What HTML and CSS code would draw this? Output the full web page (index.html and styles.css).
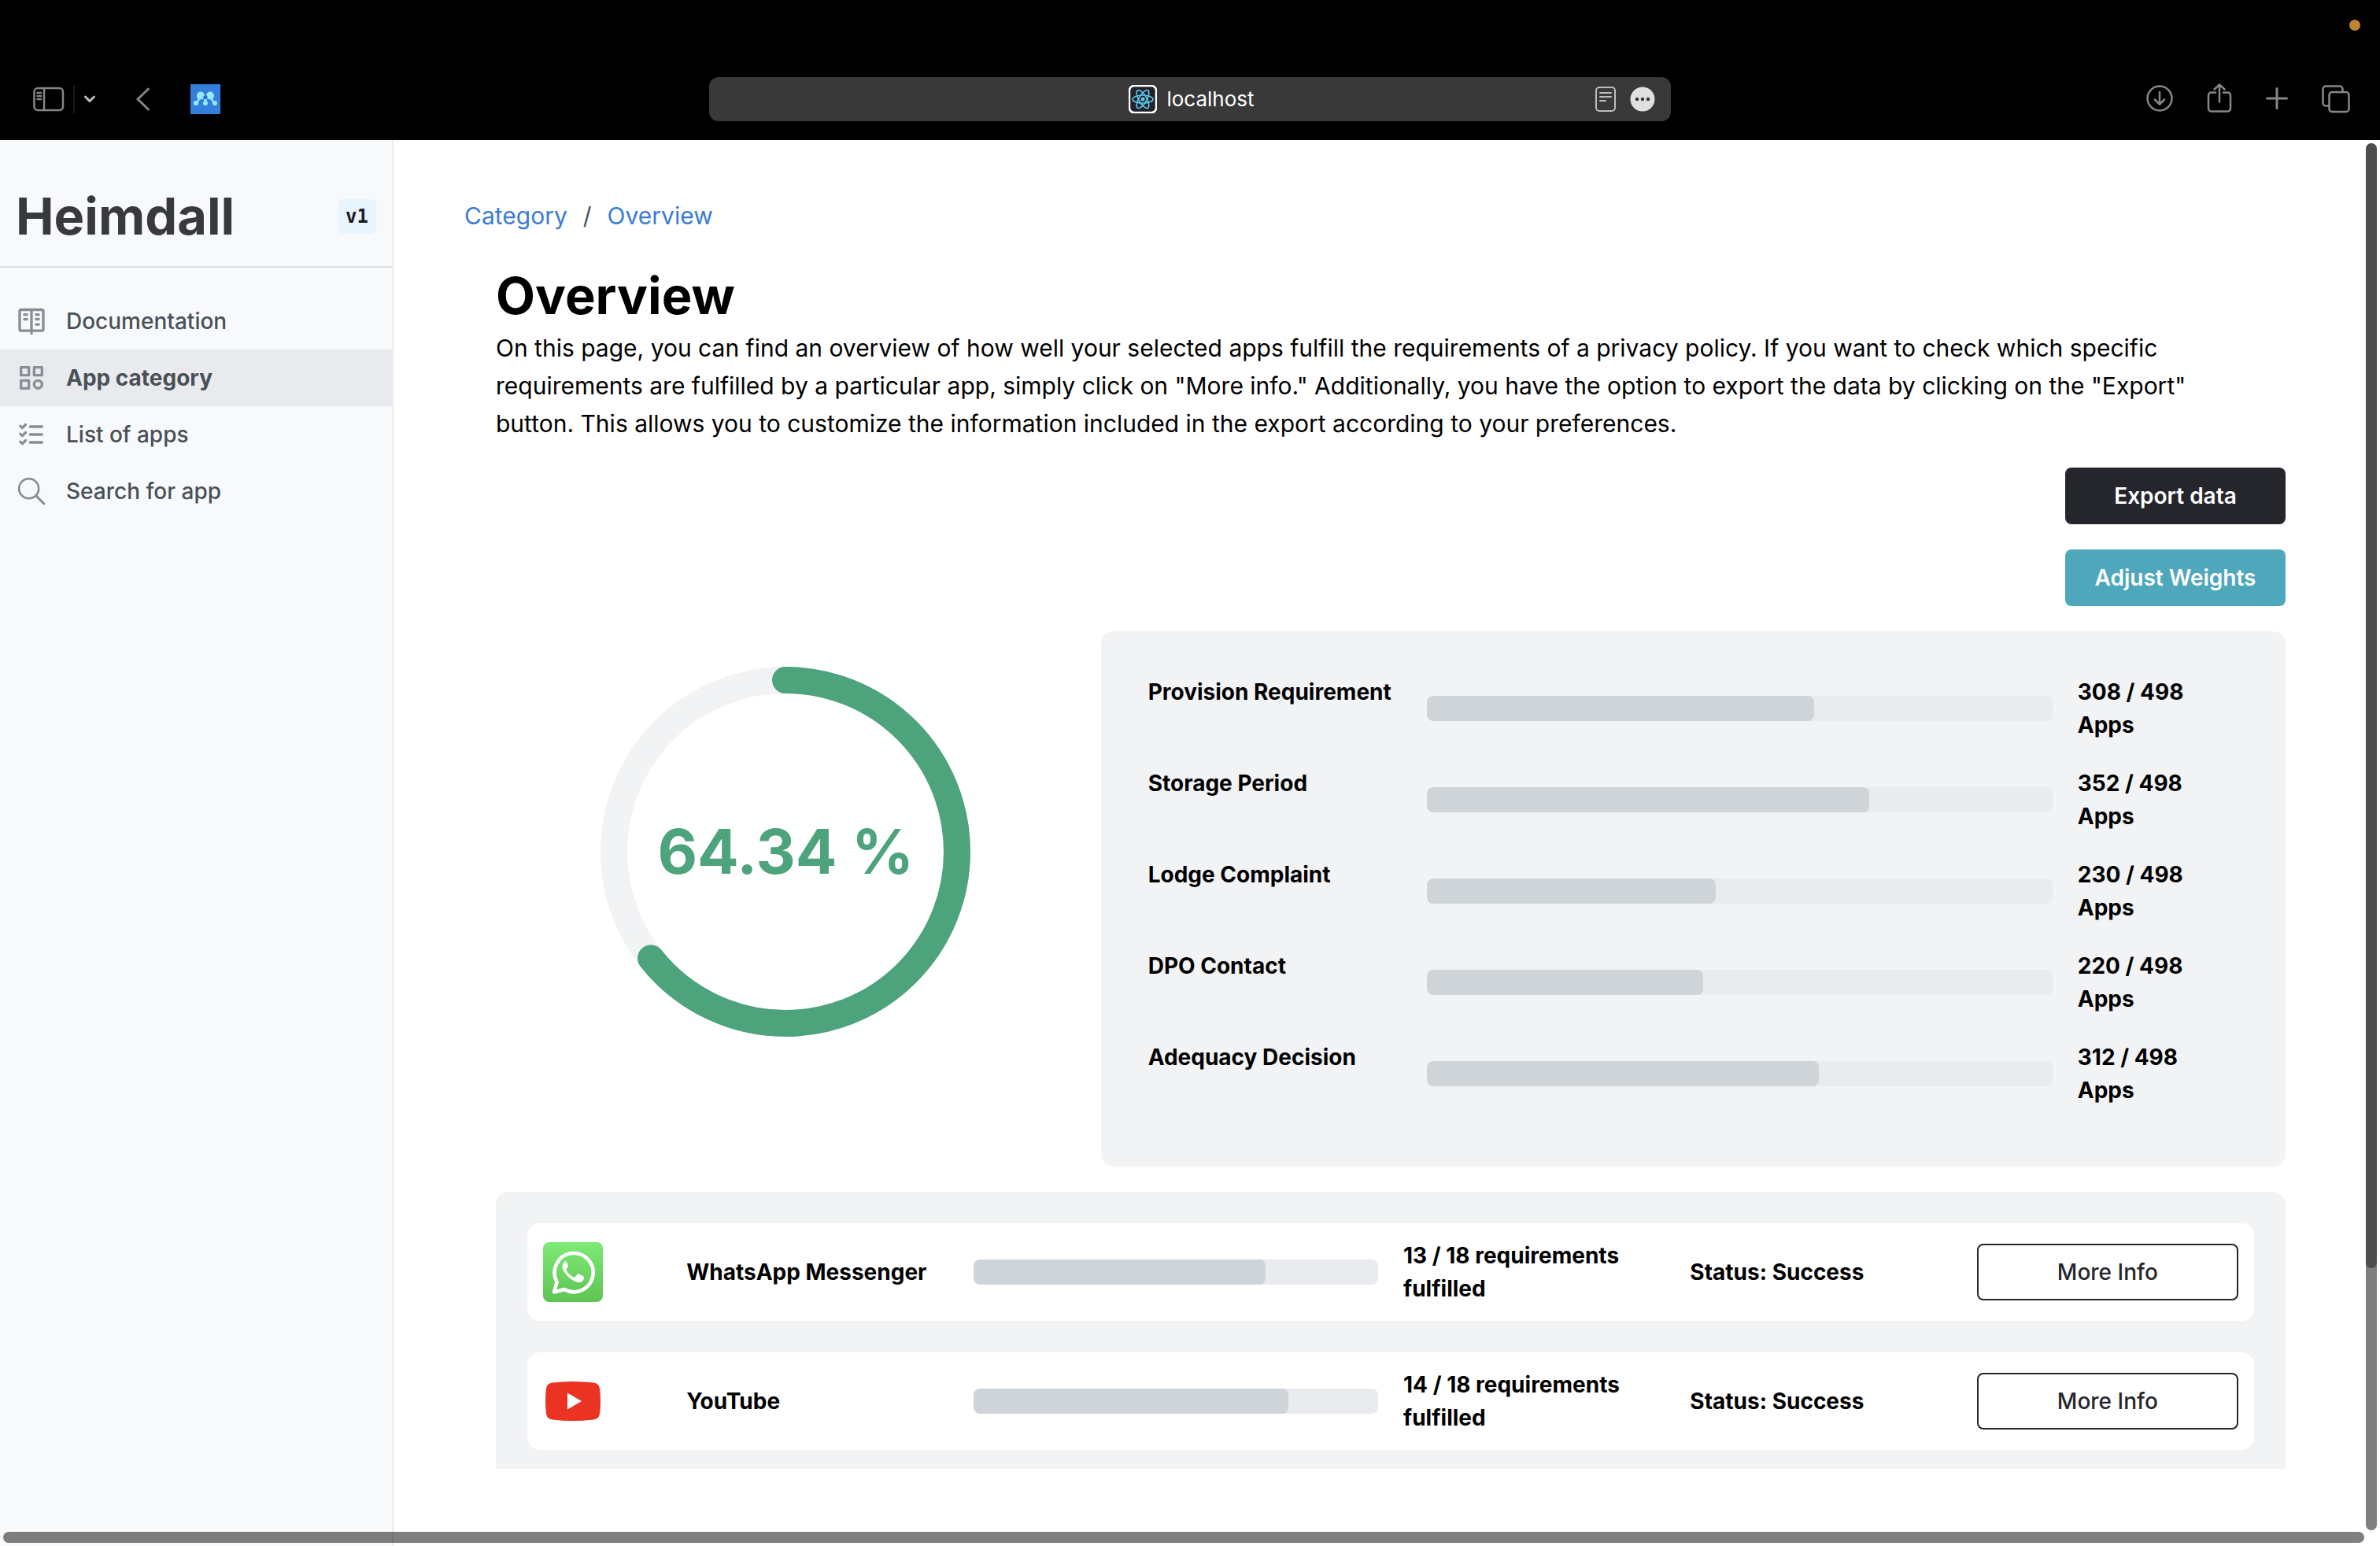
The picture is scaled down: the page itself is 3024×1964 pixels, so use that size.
FILE: index.html
```html
<!DOCTYPE html>
<html lang="en">
<head>
<meta charset="utf-8">
<title>Heimdall - Overview</title>
<link rel="stylesheet" href="styles.css">
</head>
<body>
<header class="browser">
  <span class="rec-dot"></span>
  <div class="tools tools-left">
    <button class="tool" aria-label="Show sidebar"><svg width="40" height="32" viewBox="0 0 40 32"><rect x="1.5" y="2" width="36.5" height="28" rx="4.5"/><path d="M14 2v28M5.5 8h4.5M5.5 12h4.5M5.5 16h4.5"/></svg></button>
    <span class="divider"></span>
    <button class="tool tool-chevron" aria-label="Tab groups"><svg width="16" height="12" viewBox="0 0 16 12"><path class="bright" d="M2.500 3l5.500 5.500L13.500 3"/></svg></button>
    <button class="tool tool-back" aria-label="Back"><svg width="18" height="30" viewBox="0 0 18 30"><path d="M15.500 2L2 15l13.500 13" stroke-width="3"/></svg></button>
    <button class="tool" aria-label="Mendeley"><svg class="mendeley" width="38" height="38" viewBox="0 0 38 38"><rect width="38" height="38" fill="#337fdc"/><path d="M7 24q4-2 4-9M31 24q-4-2-4-9M13 15q6 0 6 9q0-9 6-9" fill="none" stroke="#99e6ff" stroke-width="2.500"/><g fill="#99e6ff"><circle cx="7" cy="24" r="3"/><circle cx="19" cy="24" r="3"/><circle cx="31" cy="24" r="3"/><circle cx="13" cy="14.500" r="5"/><circle cx="25" cy="14.500" r="5"/></g><circle cx="19" cy="16.500" r="2.600" fill="#2a6fd0"/></svg></button>
  </div>
  <div class="address">
    <div class="site">
      <svg width="36" height="36" viewBox="0 0 36 36"><rect x="1" y="1" width="34" height="34" rx="6" fill="#20232a" stroke="#fff" stroke-width="2.500"/><g fill="none" stroke="#61c5ea" stroke-width="1.600"><ellipse cx="18" cy="18" rx="13" ry="5"/><ellipse cx="18" cy="18" rx="13" ry="5" transform="rotate(60 18 18)"/><ellipse cx="18" cy="18" rx="13" ry="5" transform="rotate(120 18 18)"/></g><circle cx="18" cy="18" r="2.500" fill="#61c5ea"/></svg>
      <span>localhost</span>
    </div>
    <div class="address-tools">
      <button class="tool" aria-label="Reader"><svg width="26" height="34" viewBox="0 0 26 34"><g stroke="#bdbdbd" stroke-width="2"><rect x="1" y="2" width="24" height="30" rx="4"/><path d="M6 9h14M6 14h14M6 19h7"/></g></svg></button>
      <button class="tool" aria-label="More"><svg width="32" height="32" viewBox="0 0 32 32"><circle cx="16" cy="16" r="15.500" fill="#e0e0e0" stroke="none"/><g fill="#333" stroke="none"><circle cx="9" cy="16" r="2.200"/><circle cx="16" cy="16" r="2.200"/><circle cx="23" cy="16" r="2.200"/></g></svg></button>
    </div>
  </div>
  <div class="tools tools-right">
    <button class="tool" aria-label="Downloads"><svg width="34" height="40" viewBox="1 2 34 40"><circle cx="18" cy="21" r="15.500"/><path d="M18 13v15M12 22.500l6 6 6-6"/></svg></button>
    <button class="tool" aria-label="Share"><svg width="32" height="40" viewBox="0 1 32 40"><path d="M11 12.500H5.500a3.500 3.500 0 0 0-3.500 3.500v17a3.500 3.500 0 0 0 3.500 3.500h21a3.500 3.500 0 0 0 3.500-3.500V16a3.500 3.500 0 0 0-3.500-3.500H21M16 24.500V3M9.500 8.500L16 2.500l6.500 6"/></svg></button>
    <button class="tool" aria-label="New tab"><svg width="28" height="40" viewBox="0 1 28 40"><path d="M14 7.500v25M1.500 20h25" stroke-width="3"/></svg></button>
    <button class="tool" aria-label="Show tabs"><svg width="36" height="40" viewBox="0 1 36 40"><path d="M9 29.500H5a3.500 3.500 0 0 1-3.500-3.500V8A3.500 3.500 0 0 1 5 4.500h18A3.500 3.500 0 0 1 26.500 8v3.500"/><rect x="9.500" y="12" width="25" height="25" rx="3.500"/></svg></button>
  </div>
</header>

<div class="app">
  <aside class="sidebar">
    <div class="brand">
      <span class="brand-name">Heimdall</span>
      <code class="version">v1</code>
    </div>
    <nav class="nav">
      <a class="nav-link" href="#docs"><svg width="40" height="40" viewBox="0 0 24 24"><rect x="3" y="3.300" width="18" height="16" rx="1.200"/><path d="M12 3.300v18M6.500 7H8.500M6.500 10.500H8.500M15.500 7H17.500M15.500 10.500H17.500M15.500 14.500H17.500"/></svg>Documentation</a>
      <a class="nav-link active" href="#category" aria-current="page"><svg width="40" height="40" viewBox="0 0 24 24"><path d="M4 4h6v6H4zM14 4h6v6h-6zM4 14h6v6H4z"/><circle cx="17" cy="17" r="3"/></svg>App category</a>
      <a class="nav-link" href="#list"><svg width="40" height="40" viewBox="0 0 24 24"><path d="M3.500 5.500L5 7l2.500-2.500M3.500 11.500L5 13l2.500-2.500M3.500 17.500L5 19l2.500-2.500M11 6h9M11 12h9M11 18h9"/></svg>List of apps</a>
      <a class="nav-link" href="#search"><svg width="40" height="40" viewBox="0 0 24 24"><path d="M15.500 15.500l6 6" stroke-width="1.800"/><circle cx="10" cy="10" r="7.500" stroke-width="1.600"/></svg>Search for app</a>
    </nav>
  </aside>

  <main class="main">
    <nav class="crumbs" aria-label="Breadcrumb"><a href="#category">Category</a><span>/</span><a href="#overview">Overview</a></nav>
    <div class="content">
      <section class="intro">
        <h1>Overview</h1>
        <p>On this page, you can find an overview of how well your selected apps fulfill the requirements of a privacy policy. If you want to check which specific requirements are fulfilled by a particular app, simply click on "More info." Additionally, you have the option to export the data by clicking on the "Export" button. This allows you to customize the information included in the export according to your preferences.</p>
      </section>
      <div class="actions">
        <button class="btn btn-dark">Export data</button>
        <button class="btn btn-teal">Adjust Weights</button>
      </div>
      <section class="summary">
        <div class="score">
          <svg width="560" height="560" viewBox="0 0 560 560" fill="none" stroke-width="34">
            <circle cx="280" cy="280" r="218" stroke="#f1f3f5"/>
            <circle cx="280" cy="280" r="218" stroke="#4ca37c" stroke-linecap="round" pathLength="10000" stroke-dasharray="6434 10000" transform="rotate(-90 280 280)"/>
          </svg>
          <span class="score-value">64.34 %</span>
        </div>
        <div class="requirements">
          <div class="req"><span>Provision Requirement</span><div class="bar"><div class="fill" style="width:61.85%"></div></div><span>308 / 498 Apps</span></div>
          <div class="req"><span>Storage Period</span><div class="bar"><div class="fill" style="width:70.68%"></div></div><span>352 / 498 Apps</span></div>
          <div class="req"><span>Lodge Complaint</span><div class="bar"><div class="fill" style="width:46.18%"></div></div><span>230 / 498 Apps</span></div>
          <div class="req"><span>DPO Contact</span><div class="bar"><div class="fill" style="width:44.18%"></div></div><span>220 / 498 Apps</span></div>
          <div class="req"><span>Adequacy Decision</span><div class="bar"><div class="fill" style="width:62.65%"></div></div><span>312 / 498 Apps</span></div>
        </div>
      </section>
      <section class="apps">
        <article class="card">
          <svg width="76" height="76" viewBox="0 0 76 76"><defs><linearGradient id="wa" x1="0" y1="0" x2="0" y2="1"><stop offset="0" stop-color="#7eea76"/><stop offset="1" stop-color="#5ec453"/></linearGradient></defs><rect width="76" height="76" rx="8" fill="url(#wa)"/><path d="M14 63.500l3.600-13A24.600 24.600 0 1 1 27 60z" fill="none" stroke="#fff" stroke-width="4.600" stroke-linejoin="round"/><path d="M28.500 24.500c-2 .5-4.300 3.500-4 7 .4 4 4 9 7.500 12.500 4 4 9 6.500 12.500 7 3.500.5 6.500-1.600 7.200-4 .6-2 .5-3.200-.3-3.700l-5.800-2.900c-1-.4-1.600-.2-2.200.5l-2.400 3c-.6.7-1.200.7-2.200.3-4-1.700-7.500-5-9.300-8.700-.4-.8-.2-1.300.4-2l1.700-2.200c.4-.6.4-1.200.1-1.900l-2.400-5.500c-.3-.5-.4-.5-.8.600z" fill="#fff"/></svg>
          <span class="app-name">WhatsApp Messenger</span>
          <div class="bar app-bar"><div class="fill" style="width:72.22%"></div></div>
          <span class="app-text">13 / 18 requirements fulfilled</span>
          <span class="app-text">Status: Success</span>
          <button class="btn btn-outline">More Info</button>
        </article>
        <article class="card">
          <svg width="76" height="76" viewBox="0 0 76 76"><path d="M12 14.500Q38 11.500 64 14.500 71 15 72 22 74 38 72 54 71 61 64 61.500 38 64.500 12 61.500 5 61 4 54 2 38 4 22 5 15 12 14.500z" fill="#ea3323"/><path d="M31 27.500L49 38 31 48.500z" fill="#fff"/></svg>
          <span class="app-name">YouTube</span>
          <div class="bar app-bar"><div class="fill" style="width:77.78%"></div></div>
          <span class="app-text">14 / 18 requirements fulfilled</span>
          <span class="app-text">Status: Success</span>
          <button class="btn btn-outline">More Info</button>
        </article>
      </section>
    </div>
  </main>
  <div class="scroll scroll-track"></div>
  <div class="scroll scroll-thumb"></div>
  <div class="scroll-bottom"></div>
</div>
</body>
</html>
```
FILE: styles.css
```css
* { box-sizing: border-box; }

body {
  margin: 0;
  min-height: 100vh;
  display: flex;
  flex-direction: column;
  background: #fff;
  color: #000;
  font-family: Inter, "Liberation Sans", sans-serif;
  font-size: 28px;
  line-height: 42px;
}

button { font: inherit; margin: 0; padding: 0; border: 0; background: none; color: inherit; }
svg { display: block; }

/* Browser toolbar */
.browser {
  position: relative;
  display: grid;
  grid-template-columns: 1fr minmax(600px, 1222px) 1fr;
  align-items: center;
  height: 178px;
  padding: 74px 38px 0;
  background: #000;
}
.rec-dot { position: absolute; top: 25px; right: 25px; width: 14px; height: 14px; border-radius: 50%; background: #c1842f; }
.tools { display: flex; align-items: center; }
.tools-left { gap: 11px; padding-left: 4px; }
.tools-right { justify-content: flex-end; gap: 43px; }
.tool svg { fill: none; stroke: #868686; stroke-width: 2.5; stroke-linecap: round; stroke-linejoin: round; }
.tool .bright { stroke: #bbb; stroke-width: 3; }
.tool .mendeley { stroke: none; }
.tool-back { margin: 0 40px; }
.divider { width: 2px; height: 36px; background: #191919; }
.address {
  display: flex;
  align-items: center;
  justify-content: center;
  position: relative;
  height: 56px;
  border-radius: 12px;
  background: #393939;
  color: #fff;
  font-size: 26px;
}
.site { display: flex; align-items: center; gap: 12px; padding-left: 4px; }
.address-tools { position: absolute; right: 20px; display: flex; align-items: center; gap: 18px; }

/* Shell */
.app { position: relative; flex: 1; display: flex; }
.sidebar { flex: 0 0 500px; background: #f8f9fb; border-right: 2px solid #e9ecef; }
.brand {
  display: flex;
  align-items: center;
  justify-content: space-between;
  padding: 54px 20px 20px;
  border-bottom: 2px solid #dee2e8;
}
.brand-name { font-size: 65px; line-height: 86px; font-weight: 700; color: #38393f; }
.version {
  padding: 0 10px;
  border-radius: 8px;
  background: #e8f4fe;
  color: #1a1b1e;
  font: 700 24px/44px "DejaVu Sans Mono", monospace;
}
.nav { padding-top: 32px; }
.nav-link {
  display: flex;
  align-items: center;
  gap: 24px;
  height: 72px;
  padding: 0 20px;
  color: #495057;
  font-weight: 500;
  text-decoration: none;
}
.nav-link svg { fill: none; stroke: #868e96; stroke-width: 2; stroke-linecap: round; stroke-linejoin: round; }
.nav-link.active { background: #e9eaee; font-weight: 700; }

/* Page */
.main { flex: 1; min-width: 0; padding: 72px 120px 98px 90px; }
.crumbs { display: flex; gap: 20px; font-size: 30px; line-height: 48px; color: #495057; }
.crumbs a { color: #3b7cd3; text-decoration: none; }
.content { display: flex; flex-direction: column; gap: 32px; padding: 36px 0 0 40px; }
.intro h1 { margin: 0; font-size: 65px; line-height: 84px; font-weight: 700; }
.intro p { margin: 0; padding-right: 40px; font-size: 30px; line-height: 48px; }
.actions { display: flex; flex-direction: column; align-items: flex-end; gap: 32px; }
.btn { height: 72px; border-radius: 8px; font-weight: 600; text-align: center; }
.btn-dark, .btn-teal { width: 280px; color: #fff; }
.btn-dark { background: #25262b; }
.btn-teal { background: #4fa7bb; }
.btn-outline { grid-column: span 2; border: 2px solid #25262b; color: #25262b; font-weight: 500; }

.summary { display: grid; grid-template-columns: repeat(12, 1fr); gap: 32px; }
.score { grid-column: span 4; display: grid; justify-content: center; align-content: start; align-items: center; justify-items: center; }
.score > * { grid-area: 1 / 1; }
.score-value { font-size: 78px; line-height: 96px; font-weight: 700; color: #4ca37c; }
.requirements {
  grid-column: span 8;
  display: flex;
  flex-direction: column;
  gap: 32px;
  padding: 56px 60px 76px;
  border-radius: 16px;
  background: #f1f3f5;
  font-weight: 700;
}
.req { display: grid; grid-template-columns: repeat(12, 1fr); gap: 32px; }
.req > :first-child { grid-column: span 3; white-space: nowrap; }
.req > .bar { grid-column: span 7; align-self: center; }
.req > :last-child { grid-column: span 2; }
.bar { height: 32px; border-radius: 8px; background: #e9ebef; overflow: hidden; }
.fill { height: 100%; border-radius: 8px; background: #ced4d8; }

.apps {
  display: flex;
  flex-direction: column;
  gap: 40px;
  padding: 40px 40px 24px;
  border-radius: 16px 16px 0 0;
  background: #f1f3f5;
}
.card {
  display: grid;
  grid-template-columns: repeat(12, 1fr);
  gap: 32px;
  align-items: center;
  padding: 20px;
  border-radius: 16px;
  background: #fff;
  font-weight: 700;
}
.app-name, .app-text { grid-column: span 2; }
.app-name { white-space: nowrap; }
.app-bar { grid-column: span 3; }

/* Overlay scrollbars */
.scroll { position: absolute; top: 4px; right: 4px; width: 14px; border-radius: 7px; }
.scroll-track { bottom: 20px; background: rgba(0, 0, 0, .5); }
.scroll-thumb { height: 80%; background: #4d4d4d; }
.scroll-bottom { position: absolute; left: 4px; right: 20px; bottom: 4px; height: 14px; border-radius: 7px; background: rgba(0, 0, 0, .5); }
```
